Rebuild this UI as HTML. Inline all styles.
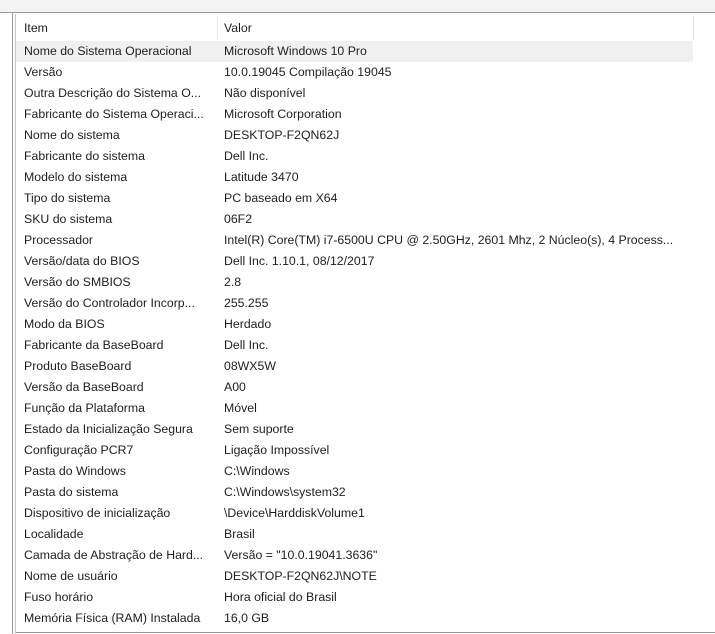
<!DOCTYPE html>
<html><head><style>
body{margin:0;width:715px;height:634px;background:#fff;position:relative;overflow:hidden;font-family:"Liberation Sans",sans-serif;font-size:12.3px;color:#1e1e1e}
.top{position:absolute;left:0;top:0;width:715px;height:12px;background:#f3f3f3;border-bottom:1px solid #9a9a9a}
.vl{position:absolute;left:12px;top:13px;width:1px;height:621px;background:#a0a0a0}
.panel{position:absolute;left:15px;top:14px;width:700px;height:618px;border-left:1px solid #c8c8c8;border-bottom:1px solid #999}
.hdr{position:absolute;left:16px;top:16px;width:677px;height:24px;border-right:1px solid #e4e4e4}
.hdr .d{position:absolute;left:201px;top:0;width:1px;height:24px;background:#e6e6e6}
.row{position:absolute;left:16px;height:21px;width:677px;line-height:21px;margin-top:2px}
.row span,.hdr span{position:absolute;white-space:nowrap}
.a{left:8px}.b{left:208px}
.sel{background:#f0f0f0}
.hdr span{line-height:24px}
</style></head><body>
<div class="top"></div><div class="vl"></div><div class="panel"></div>
<div class="hdr"><span class="a">Item</span><div class="d"></div><span class="b">Valor</span></div>
<div class="row sel" style="top:39px"><span class="a">Nome do Sistema Operacional</span><span class="b">Microsoft Windows 10 Pro</span></div>
<div class="row" style="top:60px"><span class="a">Versão</span><span class="b">10.0.19045 Compilação 19045</span></div>
<div class="row" style="top:81px"><span class="a">Outra Descrição do Sistema O...</span><span class="b">Não disponível</span></div>
<div class="row" style="top:102px"><span class="a">Fabricante do Sistema Operaci...</span><span class="b">Microsoft Corporation</span></div>
<div class="row" style="top:123px"><span class="a">Nome do sistema</span><span class="b">DESKTOP-F2QN62J</span></div>
<div class="row" style="top:144px"><span class="a">Fabricante do sistema</span><span class="b">Dell Inc.</span></div>
<div class="row" style="top:165px"><span class="a">Modelo do sistema</span><span class="b">Latitude 3470</span></div>
<div class="row" style="top:186px"><span class="a">Tipo do sistema</span><span class="b">PC baseado em X64</span></div>
<div class="row" style="top:207px"><span class="a">SKU do sistema</span><span class="b">06F2</span></div>
<div class="row" style="top:228px"><span class="a">Processador</span><span class="b">Intel(R) Core(TM) i7-6500U CPU @ 2.50GHz, 2601 Mhz, 2 Núcleo(s), 4 Process...</span></div>
<div class="row" style="top:249px"><span class="a">Versão/data do BIOS</span><span class="b">Dell Inc. 1.10.1, 08/12/2017</span></div>
<div class="row" style="top:270px"><span class="a">Versão do SMBIOS</span><span class="b">2.8</span></div>
<div class="row" style="top:291px"><span class="a">Versão do Controlador Incorp...</span><span class="b">255.255</span></div>
<div class="row" style="top:312px"><span class="a">Modo da BIOS</span><span class="b">Herdado</span></div>
<div class="row" style="top:333px"><span class="a">Fabricante da BaseBoard</span><span class="b">Dell Inc.</span></div>
<div class="row" style="top:354px"><span class="a">Produto BaseBoard</span><span class="b">08WX5W</span></div>
<div class="row" style="top:375px"><span class="a">Versão da BaseBoard</span><span class="b">A00</span></div>
<div class="row" style="top:396px"><span class="a">Função da Plataforma</span><span class="b">Móvel</span></div>
<div class="row" style="top:417px"><span class="a">Estado da Inicialização Segura</span><span class="b">Sem suporte</span></div>
<div class="row" style="top:438px"><span class="a">Configuração PCR7</span><span class="b">Ligação Impossível</span></div>
<div class="row" style="top:459px"><span class="a">Pasta do Windows</span><span class="b">C:\Windows</span></div>
<div class="row" style="top:480px"><span class="a">Pasta do sistema</span><span class="b">C:\Windows\system32</span></div>
<div class="row" style="top:501px"><span class="a">Dispositivo de inicialização</span><span class="b">\Device\HarddiskVolume1</span></div>
<div class="row" style="top:522px"><span class="a">Localidade</span><span class="b">Brasil</span></div>
<div class="row" style="top:543px"><span class="a">Camada de Abstração de Hard...</span><span class="b">Versão = "10.0.19041.3636"</span></div>
<div class="row" style="top:564px"><span class="a">Nome de usuário</span><span class="b">DESKTOP-F2QN62J\NOTE</span></div>
<div class="row" style="top:585px"><span class="a">Fuso horário</span><span class="b">Hora oficial do Brasil</span></div>
<div class="row" style="top:606px"><span class="a">Memória Física (RAM) Instalada</span><span class="b">16,0 GB</span></div>
</body></html>
